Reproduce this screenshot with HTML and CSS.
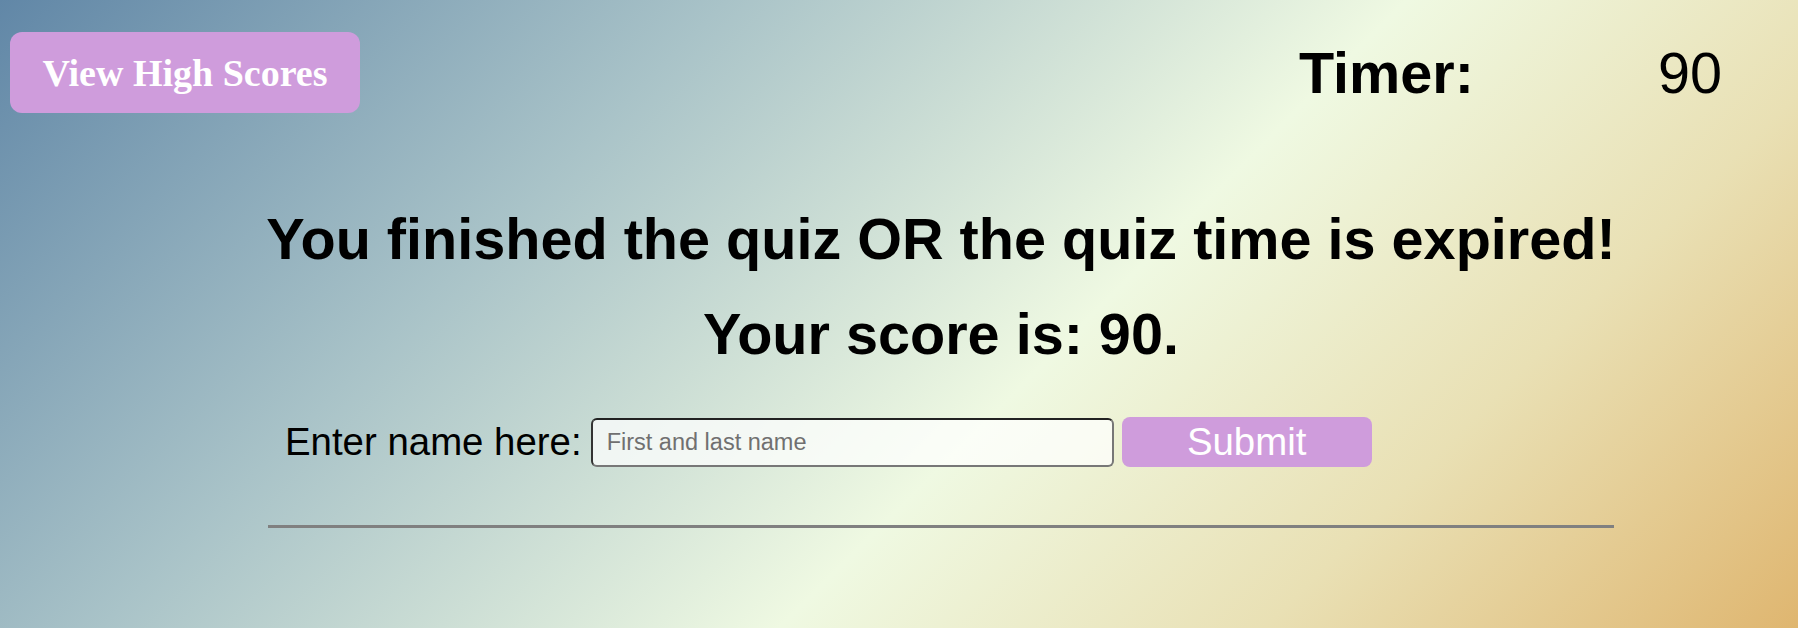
FILE: index.html
```html
<!DOCTYPE html>
<html lang="en">
<head>
<meta charset="utf-8">
<title>Quiz</title>
<link rel="stylesheet" href="styles.css">
</head>
<body>
  <header class="top-bar">
    <button class="high-scores" type="button">View High Scores</button>
    <div class="timer">
      <span class="timer-label">Timer:</span>
      <span class="timer-value">90</span>
    </div>
  </header>
  <main class="result">
    <h1 class="result-title">You finished the quiz OR the quiz time is expired!</h1>
    <h2 class="result-score">Your score is: 90.</h2>
    <form class="name-form">
      <label class="name-label" for="name">Enter name here:</label>
      <input class="name-input" id="name" type="text" placeholder="First and last name">
      <button class="submit-btn" type="button">Submit</button>
    </form>
    <hr class="divider">
  </main>
</body>
</html>
```

FILE: styles.css
```css
html, body {
  margin: 0;
  padding: 0;
}

body {
  min-height: 100vh;
  font-family: "Liberation Sans", Arial, sans-serif;
  color: #000;
  background: linear-gradient(135deg, #6187a7 0%, #a9c3c8 30%, #eff9e2 58%, #e9e0b4 78%, #dfb670 100%);
}

.top-bar {
  display: flex;
  justify-content: space-between;
  align-items: center;
  padding: 32px 76px 0 10px;
}

.high-scores {
  width: 350px;
  height: 81px;
  border: none;
  border-radius: 12px;
  background: #cf9cdc;
  color: #fff;
  font-family: "Liberation Serif", "Times New Roman", serif;
  font-weight: bold;
  font-size: 38px;
  padding: 0;
  cursor: pointer;
}

.timer {
  display: flex;
  align-items: baseline;
  gap: 184px;
  font-size: 57.6px;
  margin-top: 1px;
}

.timer-label {
  font-weight: bold;
}

.timer-value {
  font-weight: normal;
}

.result {
  width: 1346px;
  margin-left: 268px;
  padding-top: 93px;
}

.result-title,
.result-score {
  font-size: 57.6px;
  font-weight: bold;
  text-align: center;
  margin: 0 -20px;
  white-space: nowrap;
}

.result-score {
  margin-top: 29px;
}

.name-form {
  display: flex;
  align-items: center;
  margin-top: 50px;
  padding-left: 17px;
}

.name-label {
  font-size: 38.4px;
  margin-right: 9px;
}

.name-input {
  box-sizing: border-box;
  width: 523px;
  height: 49px;
  border: 2px solid;
  border-color: #222 #777 #777 #333;
  border-radius: 6px;
  background: rgba(255, 255, 255, 0.72);
  padding: 0 14px;
  font-family: "Liberation Sans", Arial, sans-serif;
  font-size: 23.5px;
  color: #000;
}

.name-input::placeholder {
  color: #707070;
}

.submit-btn {
  width: 250px;
  height: 50px;
  margin-left: 8px;
  border: none;
  border-radius: 8px;
  background: #cf9cdc;
  color: #fff;
  font-family: "Liberation Sans", Arial, sans-serif;
  font-size: 38.4px;
  padding: 0;
  cursor: pointer;
}

.divider {
  margin: 58px 0 0 0;
  height: 3px;
  border: none;
  background: #808080;
}
```
